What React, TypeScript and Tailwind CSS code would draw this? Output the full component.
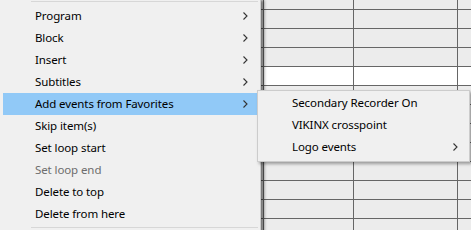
import React from "react";

const Chevron = () => (
  <svg width="5" height="8" viewBox="0 0 5 8" className="block">
    <polyline points="0.5,0.5 4,4 0.5,7.5" fill="none" stroke="#333" strokeWidth="1.1" />
  </svg>
);

type Item = { label: string; sub?: boolean; disabled?: boolean; active?: boolean };

const mainItems: Item[] = [
  { label: "Program", sub: true },
  { label: "Block", sub: true },
  { label: "Insert", sub: true },
  { label: "Subtitles", sub: true },
  { label: "Add events from Favorites", sub: true, active: true },
  { label: "Skip item(s)" },
  { label: "Set loop start" },
  { label: "Set loop end", disabled: true },
  { label: "Delete to top" },
  { label: "Delete from here" },
];

const subItems: Item[] = [
  { label: "Secondary Recorder On" },
  { label: "VIKINX crosspoint" },
  { label: "Logo events", sub: true },
];

const MenuRow = ({ item }: { item: Item }) => (
  <div
    className={
      "h-[22px] flex items-center pl-[32px] pr-[9px] " +
      (item.active ? "bg-[#91c9f7] " : "") +
      (item.disabled ? "text-[#6d6d6d]" : "text-black")
    }
  >
    <span className="flex-1 whitespace-nowrap leading-none">{item.label}</span>
    {item.sub && <Chevron />}
  </div>
);

const rowHeights = [10, 19, 19, 19, 19, 19, 19, 19, 19, 19, 19, 19, 19];

export default function App() {
  return (
    <div
      className="relative w-[471px] h-[230px] overflow-hidden bg-[#ececec] text-[11.5px] tracking-[-0.1px]"
      style={{ fontFamily: '"Noto Sans", "Open Sans", sans-serif' }}
    >
      {/* underlying grid */}
      <div className="flex flex-col">
        {rowHeights.map((h, i) => (
          <div
            key={i}
            className={
              "flex border-b border-[#666666] shrink-0 " +
              (i === 4 ? "bg-white" : "bg-[#ececec]")
            }
            style={{ height: h }}
          >
            <div className="w-[264px] border-r border-[#666666] shrink-0" />
            <div className="w-[90px] border-r border-[#666666] shrink-0" />
            <div className="w-[104px] border-r border-[#666666] shrink-0" />
            <div className="flex-1" />
          </div>
        ))}
      </div>

      {/* main context menu */}
      <div className="absolute left-0 top-0 w-[261px] h-[240px] bg-[#f0f0f0] border-r border-[#cccccc] shadow-[3px_0_3px_rgba(0,0,0,0.5)]">
        <div className="mt-[1px] ml-[31px] mr-[2px] h-px bg-[#d7d7d7]" />
        <div className="mt-[3px] px-[3px]">
          {mainItems.map((it) => (
            <MenuRow key={it.label} item={it} />
          ))}
        </div>
        <div className="mt-[2px] ml-[31px] mr-[2px] h-px bg-[#d7d7d7]" />
      </div>

      {/* submenu */}
      <div className="absolute left-[257px] top-[90px] w-[213px] h-[72px] bg-[#f0f0f0] border border-[#cccccc] shadow-[2px_2px_3px_rgba(0,0,0,0.35)] pt-[1px] px-[2px]">
        {subItems.map((it) => (
          <MenuRow key={it.label} item={it} />
        ))}
      </div>
    </div>
  );
}
